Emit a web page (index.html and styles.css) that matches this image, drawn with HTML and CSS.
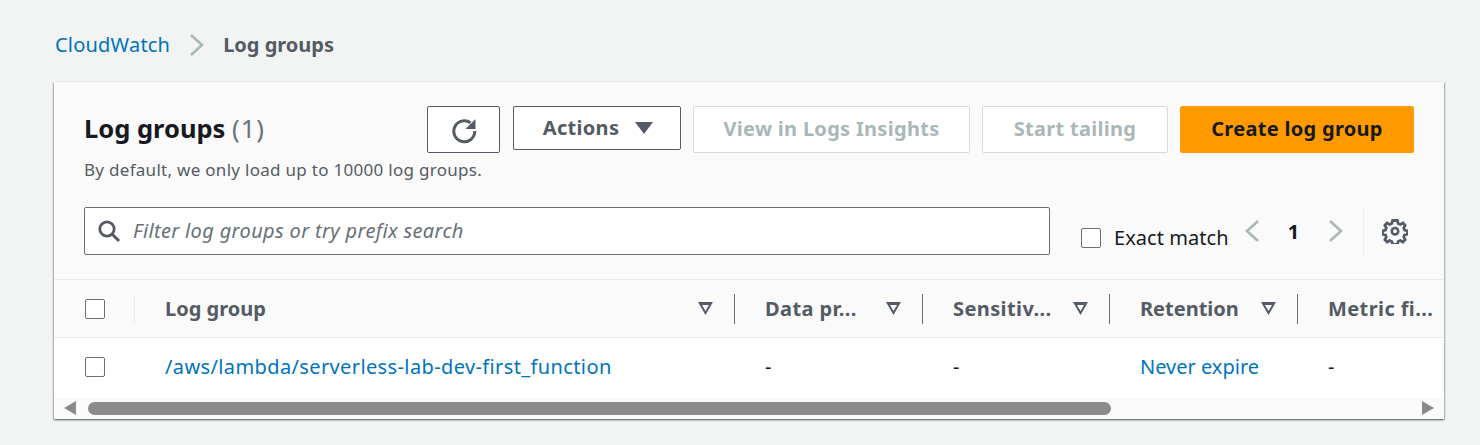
FILE: index.html
```html
<!DOCTYPE html>
<html lang="en">
<head>
    <meta charset="UTF-8">
    <title>Log groups</title>
    <link rel="stylesheet" href="styles.css">
</head>
<body>

<nav class="breadcrumb">
    <a href="#" class="crumb-link">CloudWatch</a>
    <svg class="crumb-sep" width="16" height="24" viewBox="0 0 16 24"><path d="M2 2l11 10L2 22" fill="none" stroke="#aab7b8" stroke-width="2.6"/></svg>
    <span class="crumb-current">Log groups</span>
</nav>

<div class="card">
    <div class="card-head">
        <div class="title-row">
            <div class="title-block">
                <h1>Log groups <span class="count">(1)</span></h1>
                <p>By default, we only load up to 10000 log groups.</p>
            </div>
            <div class="actions">
                <button class="btn btn-refresh" aria-label="Refresh">
                    <svg width="28" height="28" viewBox="0 0 28 28"><path d="M20.500 6.800A10.500 10.500 0 1 0 24.800 15" fill="none" stroke="#545b64" stroke-width="3"/><path d="M25.500 3v10h-10z" fill="#545b64"/></svg>
                </button>
                <button class="btn btn-actions">Actions <span class="caret"></span></button>
                <button class="btn btn-disabled btn-insights">View in Logs Insights</button>
                <button class="btn btn-disabled btn-tail">Start tailing</button>
                <button class="btn btn-primary">Create log group</button>
            </div>
        </div>
        <div class="filter-row">
            <div class="search">
                <svg width="24" height="24" viewBox="0 0 24 24"><circle cx="10" cy="10" r="7.200" fill="none" stroke="#545b64" stroke-width="2.800"/><path d="M15 15l7 7" stroke="#545b64" stroke-width="3"/></svg>
                <span class="search-text">Filter log groups or try prefix search</span>
            </div>
            <label class="exact"><span class="check"></span>Exact match</label>
            <div class="pager">
                <svg width="16" height="24" viewBox="0 0 16 24"><path d="M14 2L3 12l11 10" fill="none" stroke="#aab7b8" stroke-width="2.600"/></svg>
                <span class="page-num">1</span>
                <svg width="16" height="24" viewBox="0 0 16 24"><path d="M2 2l11 10L2 22" fill="none" stroke="#aab7b8" stroke-width="2.600"/></svg>
            </div>
            <div class="gear">
                <svg width="26" height="26" viewBox="0 0 26 26">
                    <path d="M10.500 2.500h5l.6 3 2.300 1 2.600-1.700 2.200 2.500-1.500 2.600.9 2.300 2.900.6v3.400l-2.900.6-.9 2.300 1.500 2.600-2.200 2.500-2.600-1.700-2.300 1-.6 3h-5l-.6-3-2.300-1-2.600 1.700-2.200-2.500 1.500-2.600-.9-2.300-2.900-.6v-3.400l2.900-.6.9-2.300-1.500-2.600 2.200-2.500 2.600 1.700 2.300-1z" fill="none" stroke="#545b64" stroke-width="2.800" stroke-linejoin="round"/>
                    <circle cx="13" cy="13.200" r="3.200" fill="none" stroke="#545b64" stroke-width="2.600"/>
                </svg>
            </div>
        </div>
    </div>

    <div class="table">
        <div class="cell head first"><span class="check"></span><i class="sep light"></i></div>
        <div class="cell head"><b>Log group</b><span class="sort"></span><i class="sep"></i></div>
        <div class="cell head"><b class="cut">Data pr...</b><span class="sort"></span><i class="sep"></i></div>
        <div class="cell head"><b class="cut">Sensitiv...</b><span class="sort"></span><i class="sep"></i></div>
        <div class="cell head"><b>Retention</b><span class="sort"></span><i class="sep"></i></div>
        <div class="cell head"><b class="cut">Metric fi...</b></div>

        <div class="cell first"><span class="check"></span></div>
        <div class="cell"><a href="#" class="log-link">/aws/lambda/serverless-lab-dev-first_function</a></div>
        <div class="cell">-</div>
        <div class="cell">-</div>
        <div class="cell"><a href="#">Never expire</a></div>
        <div class="cell">-</div>
    </div>

    <div class="scrollbar">
        <span class="arrow arrow-left"></span>
        <div class="track"><div class="thumb"></div></div>
        <span class="arrow arrow-right"></span>
    </div>
</div>

</body>
</html>
```

FILE: styles.css
```css
* {
    box-sizing: border-box;
}
body {
    margin: 0;
    padding: 0 36px 0 54px;
    height: 445px;
    overflow: hidden;
    background-color: #f2f3f3;
    font-family: "Noto Sans", Arial, sans-serif;
    font-size: 20px;
    color: #16191f;
}
a {
    color: #0073bb;
    text-decoration: none;
}
.breadcrumb {
    display: flex;
    align-items: center;
    height: 82px;
    padding: 7px 0 0 1px;
}
.crumb-link {
    letter-spacing: 0.2px;
}
.crumb-sep {
    margin: 0 18px 0 19px;
}
.crumb-current {
    font-weight: 700;
    color: #545b64;
}
.card {
    background-color: #fafafa;
    box-shadow: 0 1px 2px rgba(0, 28, 36, 0.5), 1px 1px 1px rgba(0, 28, 36, 0.15), -1px 1px 1px rgba(0, 28, 36, 0.15);
}
.card-head {
    padding: 24px 30px;
}
.title-row {
    display: flex;
    justify-content: space-between;
    height: 101px;
}
.title-block {
    width: 342px;
    white-space: nowrap;
}
h1 {
    margin: 2px 0 0;
    font-size: 25.500px;
    line-height: 40px;
    font-weight: 700;
}
.count {
    font-weight: 400;
    color: #687078;
    letter-spacing: 1px;
}
.title-block p {
    margin: 10px 0 0;
    font-size: 17px;
    line-height: 24px;
    letter-spacing: 0.29px;
    color: #545b64;
}
.actions {
    display: flex;
    flex: none;
    gap: 12px;
    align-items: flex-start;
}
.btn {
    display: flex;
    flex: none;
    align-items: center;
    justify-content: center;
    height: 47px;
    padding: 0 0 2px;
    border: 1px solid #545b64;
    border-radius: 2px;
    background-color: #fff;
    font-family: inherit;
    font-size: 20px;
    font-weight: 700;
    letter-spacing: 0.3px;
    color: #545b64;
}
.btn-refresh {
    width: 73px;
    margin-right: 1px;
    padding: 0;
}
.btn-actions {
    width: 168px;
    height: 44px;
    padding-left: 2px;
}
.caret {
    width: 0;
    height: 0;
    margin: 2px 0 0 16px;
    border-left: 9px solid transparent;
    border-right: 9px solid transparent;
    border-top: 12px solid #545b64;
}
.btn-disabled {
    border-color: #d5dbdb;
    color: #aab7b8;
}
.btn-insights {
    width: 277px;
}
.btn-tail {
    width: 186px;
}
.btn-primary {
    width: 234px;
    border-color: #ff9900;
    background-color: #ff9900;
    color: #16191f;
}
.filter-row {
    display: flex;
    align-items: flex-start;
}
.search {
    display: flex;
    align-items: center;
    gap: 12px;
    width: 966px;
    height: 48px;
    padding-left: 12px;
    border: 1px solid #687078;
    border-radius: 2px;
    background-color: #fff;
    font-style: italic;
    color: #687078;
}
.search-text {
    margin-top: -2px;
    letter-spacing: 0.35px;
}
.check {
    display: block;
    flex: none;
    width: 20px;
    height: 20px;
    border: 1px solid #687078;
    border-radius: 2px;
    background-color: #fff;
}
.exact {
    display: flex;
    align-items: center;
    gap: 13px;
    margin: 19px 0 0 31px;
    line-height: 24px;
    letter-spacing: 0.05px;
}
.pager {
    display: flex;
    align-items: center;
    justify-content: space-between;
    width: 100px;
    height: 24px;
    margin: 12px 0 0 15px;
}
.page-num {
    font-weight: 700;
}
.gear {
    display: flex;
    align-items: center;
    justify-content: flex-end;
    width: 45px;
    height: 48px;
    margin-left: 19px;
    padding: 0;
    border-left: 1px solid #eaeded;
}
.table {
    display: grid;
    grid-template-columns: 81px 600px 188px 187px 188px 146px;
}
.cell {
    position: relative;
    display: flex;
    align-items: center;
    height: 59px;
    padding: 0 22px 2px 30px;
    background-color: #fff;
    white-space: nowrap;
}
.cell.first {
    padding-left: 31px;
}
.log-link {
    letter-spacing: 0.38px;
}
.head {
    height: 59px;
    padding-bottom: 0;
    border-top: 1px solid #eaeded;
    border-bottom: 1px solid #eaeded;
    background-color: #fafafa;
    justify-content: space-between;
}
.head b {
    color: #545b64;
    font-weight: 700;
}
.head .cut {
    letter-spacing: 0.4px;
}
.cell .check {
    margin-top: 1px;
}
.sort {
    width: 15px;
    height: 13px;
    background-color: #545b64;
    clip-path: polygon(evenodd, 0 0, 100% 0, 50% 100%, 0 0, 4px 3px, 50% 9px, 11px 3px, 4px 3px);
}
.sep {
    position: absolute;
    right: 0;
    top: 14px;
    width: 1px;
    height: 30px;
    background-color: #687078;
}
.sep.light {
    background-color: #eaeded;
}
.scrollbar {
    display: flex;
    align-items: center;
    height: 22px;
    padding: 0 10px;
    background-color: #fafafa;
}
.arrow {
    width: 0;
    height: 0;
    border-top: 7px solid transparent;
    border-bottom: 7px solid transparent;
}
.arrow-left {
    border-right: 12px solid #8b8b8b;
}
.arrow-right {
    border-left: 12px solid #8b8b8b;
}
.track {
    flex: 1;
    padding: 0 311px 0 12px;
}
.thumb {
    height: 13px;
    border-radius: 7px;
    background-color: #8b8b8b;
}
```
